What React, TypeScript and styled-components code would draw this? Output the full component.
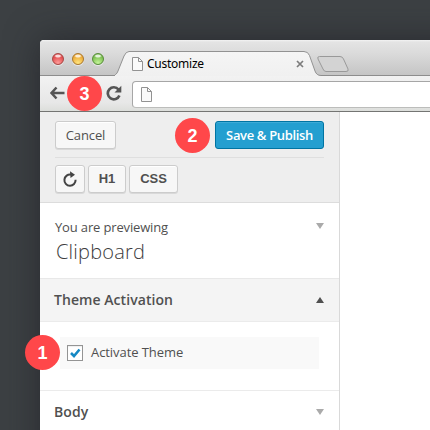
import React from "react";
import styled, { createGlobalStyle } from "styled-components";

const Global = createGlobalStyle`
  *, *::before { box-sizing: border-box; }
  body { margin: 0; overflow: hidden; }
`;

const Desktop = styled.main`
  position: relative;
  width: 430px;
  height: 430px;
  padding: 40px 0 0 40px;
  overflow: hidden;
  background: #3c4043;
  font-family: "Open Sans", sans-serif;
  color: #505050;
`;

const BrowserWindow = styled.section`
  width: 430px;
  height: 430px;
  display: flex;
  flex-direction: column;
  border-radius: 4px 0 0 0;
  overflow: hidden;
  background: #fff;
  box-shadow: 0 0 34px #1f1f24a8;
`;

const TabStrip = styled.header`
  flex: none;
  height: 36px;
  display: flex;
  background: linear-gradient(#f3f3f3 0, #e4e4e4 2px, #dadada 14px, #c5c5c5 35px);
  box-shadow: inset 0 -1px #8d8d8d;
`;

const WindowControls = styled.div`
  display: flex;
  gap: 8px;
  width: 75px;
  padding: 13px 0 0 12px;
`;

const Light = styled.i<{ $edge: string; $base: string; $glow: string }>`
  width: 12px;
  height: 12px;
  border: 1px solid ${(p) => p.$edge};
  border-radius: 50%;
  background: radial-gradient(ellipse 4px 2px at 50% 20%, #fffc 0 50%, transparent),
    radial-gradient(circle at 50% 90%, ${(p) => p.$glow}, ${(p) => p.$base} 75%);
  box-shadow: 0 1px 1px #fff9;
`;

const Tab = styled.div`
  position: relative;
  width: 206px;
  height: 36px;
  display: flex;
  align-items: center;
  padding: 12px 17px 0 17px;
  font: 12px/16px "Noto Sans", sans-serif;
  color: #000;
`;

const TabShape = styled.svg`
  position: absolute;
  inset: 0;
`;

const TabLabel = styled.span`
  position: relative;
  flex: 1;
  margin-left: 4px;
  letter-spacing: -0.25px;
`;

const Glyph = styled.svg`
  position: relative;
  flex: none;
  display: block;
`;

const NewTab = styled.svg`
  margin: 15px 0 0 -5px;
`;

const Toolbar = styled.nav`
  flex: none;
  height: 36px;
  display: flex;
  align-items: center;
  padding: 0 0 2px 9px;
  background: linear-gradient(#f2f2f2, #e7e7e7 27px, #dcdedb);
  border-bottom: 1px solid #747573;
`;

const NavButtons = styled.div`
  display: flex;
  gap: 41px;
`;

const Address = styled.div`
  flex: 1;
  height: 27px;
  margin: 3px 0 0 10px;
  padding: 5px 8px;
  background: #fff;
  border: 1px solid #a6a6a6;
  border-bottom-color: #bcbdbb;
  border-radius: 4px;
`;

const Sidebar = styled.aside`
  width: 300px;
  flex: 1;
  border-right: 1px solid #d9d9d9;
`;

const Actions = styled.div`
  height: 91px;
  padding: 9px 15px 0;
  background: #eee;
  border-bottom: 1px solid #dcdcdc;
`;

const PrimaryRow = styled.div`
  display: flex;
  justify-content: space-between;
  height: 37px;
  border-bottom: 1px solid #dfdfdf;
`;

const ToolRow = styled.div`
  display: flex;
  gap: 3px;
  padding-top: 7px;
`;

const Button = styled.button<{ $width: number; $kind?: "primary" | "tool" }>`
  display: flex;
  align-items: center;
  justify-content: center;
  width: ${(p) => p.$width}px;
  height: 28px;
  padding: 0;
  border: 1px solid ${(p) => (p.$kind === "primary" ? "#0074a2" : "#ccc")};
  border-radius: 3px;
  background: ${(p) => (p.$kind === "primary" ? "#249fd0" : "#f7f7f7")};
  box-shadow: ${(p) =>
    p.$kind === "primary" ? "inset 0 1px #3eabd7" : "inset 0 1px #fff, 0 1px #d9d9d9"};
  color: ${(p) => (p.$kind === "primary" ? "#fff" : "#505050")};
  font: ${(p) =>
    p.$kind === "tool"
      ? 'bold 13px/16px "Liberation Sans", sans-serif'
      : `${p.$kind === "primary" ? 600 : 400} 13px/18px "Open Sans", sans-serif`};
  letter-spacing: ${(p) => (p.$kind === "primary" ? "-0.35px" : "-0.1px")};
  white-space: nowrap;
`;

const Preview = styled.div`
  display: flex;
  justify-content: space-between;
  height: 76px;
  padding: 15px 15px 0;
  border-bottom: 1px solid #e8e8e8;
`;

const PreviewText = styled.div`
  font-size: 13px;
  line-height: 18px;
  letter-spacing: -0.15px;
`;

const ThemeName = styled.h1`
  margin: 3px 0 0 1px;
  font-size: 20px;
  line-height: 26px;
  font-weight: 300;
  letter-spacing: 0.2px;
  color: #3c3c3c;
`;

const Arrow = styled.i<{ $up?: boolean }>`
  width: 8px;
  height: 6px;
  background: ${(p) => (p.$up ? "#505050" : "#aaa")};
  clip-path: ${(p) => (p.$up ? "polygon(50% 0, 100% 100%, 0 100%)" : "polygon(0 0, 100% 0, 50% 100%)")};
`;

const PreviewArrow = styled(Arrow)`
  margin-top: 5px;
`;

const SectionHeading = styled.h2<{ $open?: boolean }>`
  display: flex;
  align-items: center;
  justify-content: space-between;
  height: 43px;
  margin: 0;
  padding: 0 15px 0 14px;
  background: ${(p) => (p.$open ? "#f4f4f4" : "#fff")};
  border-bottom: 1px solid #ebebeb;
  font-size: 14px;
  line-height: 20px;
  font-weight: 600;
  letter-spacing: 0.06px;
`;

const SectionBody = styled.div`
  height: 69px;
  padding: 15px 20px 0;
  border-bottom: 1px solid #ebebeb;
`;

const Option = styled.label`
  display: flex;
  align-items: center;
  gap: 8px;
  height: 32px;
  padding-left: 7px;
  background: #f9f9f9;
  font-size: 13px;
  letter-spacing: -0.07px;
`;

const OptionText = styled.span`
  padding-bottom: 2px;
`;

const CheckBox = styled.span`
  width: 16px;
  height: 16px;
  margin-bottom: 1px;
  border: 1px solid #949494;
  background: #fff;
  box-shadow: inset 0 1px 1px #0001;
`;

const Badge = styled.b<{ $x: number; $y: number }>`
  position: absolute;
  left: ${(p) => p.$x}px;
  top: ${(p) => p.$y}px;
  width: 35px;
  height: 35px;
  border-radius: 50%;
  background: #ff474a;
  color: #fff;
  font: bold 18px/36px "Liberation Sans", sans-serif;
  text-align: center;
`;

const PageGlyph = ({ w, h }: { w: number; h: number }) => (
  <Glyph width={w} height={h} viewBox={`0 0 ${w} ${h}`}>
    <path d={`M.5 .5h6l4 4v${h - 5}H.5z`} fill="#fafafa" stroke="#929292" />
    <path d="M6.5.5v4h4" fill="none" stroke="#929292" />
  </Glyph>
);

export default function App() {
  return (
    <Desktop>
      <Global />
      <BrowserWindow>
        <TabStrip>
          <WindowControls>
            <Light $edge="#a64744" $base="#df4345" $glow="#ff9d9b" />
            <Light $edge="#aa782e" $base="#eba52f" $glow="#ffe681" />
            <Light $edge="#588c3b" $base="#74b948" $glow="#c5f59a" />
          </WindowControls>
          <Tab>
            <TabShape width="206" height="36" viewBox="0 0 206 36">
              <defs>
                <linearGradient id="tab-face" x2="0" y2="1">
                  <stop stopColor="#f5f5f5" />
                  <stop offset="1" stopColor="#f0f0f0" />
                </linearGradient>
              </defs>
              <path
                d="M-3 36v-.5Q1.5 35.5 3 31L9 16Q11 11.5 14 11.5H189Q193 11.5 194.5 15.5L200 31Q201.5 35.5 206 35.5V36Z"
                fill="url(#tab-face)"
              />
              <path
                d="M-3 35.5Q1.5 35.5 3 31L9 16Q11 11.5 14 11.5H189Q193 11.5 194.5 15.5L200 31Q201.5 35.5 206 35.5"
                fill="none"
                stroke="#929292"
              />
            </TabShape>
            <PageGlyph w={11} h={14} />
            <TabLabel>Customize</TabLabel>
            <Glyph width="8" height="8" viewBox="0 0 8 8">
              <path d="M1 1l6 6M7 1L1 7" stroke="#7c7c7c" strokeWidth="1.7" />
            </Glyph>
          </Tab>
          <NewTab width="34" height="18" viewBox="0 0 34 18">
            <path
              d="M3.5 1.5H24Q26.5 1.5 27.5 4L32 14Q33 16.5 30 16.5H10Q8 16.5 7 14L2 4Q1 1.5 3.5 1.5Z"
              fill="#d3d3d3"
              stroke="#999"
            />
          </NewTab>
        </TabStrip>
        <Toolbar>
          <NavButtons>
            <Glyph width="16" height="16" viewBox="0 0 16 16">
              <path d="M7.5 2.5L2.5 8L7.5 13.5M3 8H15.5" fill="none" stroke="#555" strokeWidth="2.5" />
            </Glyph>
            <Glyph width="16" height="16" viewBox="0 0 16 16">
              <path d="M12.5 4.5A6 6 0 1 0 13.4 10.5" fill="none" stroke="#555" strokeWidth="2.7" />
              <path d="M15.3 .8V7.5H8.5Z" fill="#555" />
            </Glyph>
          </NavButtons>
          <Address>
            <PageGlyph w={11} h={15} />
          </Address>
        </Toolbar>
        <Sidebar>
          <Actions>
            <PrimaryRow>
              <Button $width={61}>Cancel</Button>
              <Button $width={109} $kind="primary">Save &amp; Publish</Button>
            </PrimaryRow>
            <ToolRow>
              <Button $width={30} $kind="tool" aria-label="Refresh">
                <Glyph width="14" height="16" viewBox="0 0 14 16">
                  <path d="M8 3.6A5.6 5.6 0 1 0 12.6 8.8" fill="none" stroke="#444" strokeWidth="2" />
                  <path d="M7 .2L12 3.8L7.5 7Z" fill="#444" />
                </Glyph>
              </Button>
              <Button $width={38} $kind="tool">H1</Button>
              <Button $width={49} $kind="tool">CSS</Button>
            </ToolRow>
          </Actions>
          <Preview>
            <PreviewText>
              You are previewing
              <ThemeName>Clipboard</ThemeName>
            </PreviewText>
            <PreviewArrow />
          </Preview>
          <SectionHeading $open>
            Theme Activation <Arrow $up />
          </SectionHeading>
          <SectionBody>
            <Option>
              <CheckBox>
                <Glyph width="14" height="14" viewBox="0 0 14 14">
                  <path d="M3 7L6 10L11.5 3.5" fill="none" stroke="#1689c4" strokeWidth="2.6" />
                </Glyph>
              </CheckBox>
              <OptionText>Activate Theme</OptionText>
            </Option>
          </SectionBody>
          <SectionHeading>
            Body <Arrow />
          </SectionHeading>
        </Sidebar>
      </BrowserWindow>
      <Badge $x={67} $y={76}>3</Badge>
      <Badge $x={175} $y={118}>2</Badge>
      <Badge $x={25} $y={335}>1</Badge>
    </Desktop>
  );
}
